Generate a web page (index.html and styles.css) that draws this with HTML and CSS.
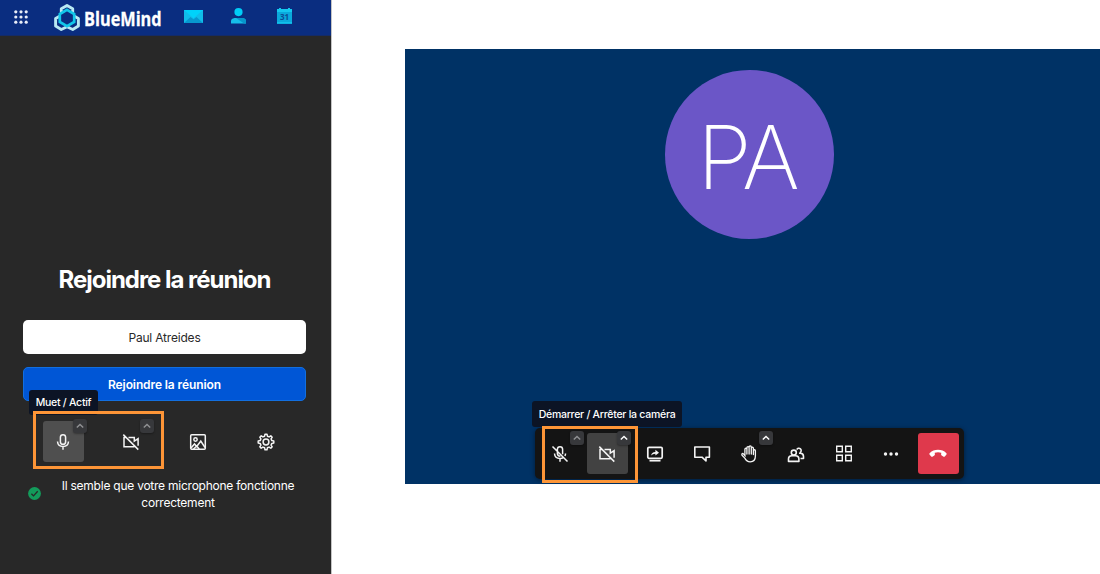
FILE: index.html
```html
<!DOCTYPE html>
<html lang="fr">
<head>
<meta charset="utf-8">
<title>BlueMind</title>
<link rel="stylesheet" href="styles.css">
</head>
<body>
<svg class="defs" aria-hidden="true">
  <symbol id="chevron" viewBox="0 0 14 14"><path d="M3.8 8.6 7 5.4l3.2 3.2" fill="none" stroke="currentColor" stroke-width="1.4"/></symbol>
  <symbol id="camera-off" viewBox="0 0 18 18"><path d="M3.500 4.500H2v9.200h10.500M6.500 4.500h5.800v3.600l3.800-2.500v7.200M1.300 1.600l15 15" fill="none" stroke="currentColor" stroke-width="1.5"/></symbol>
</svg>
<div class="screen">
  <aside class="panel">
    <header class="topbar">
      <svg class="apps" viewBox="0 0 14 14" fill="#e9edf7"><circle cx="1.800" cy="1.800" r="1.600"/><circle cx="7" cy="1.800" r="1.600"/><circle cx="12.200" cy="1.800" r="1.600"/><circle cx="1.800" cy="7" r="1.600"/><circle cx="7" cy="7" r="1.600"/><circle cx="12.200" cy="7" r="1.600"/><circle cx="1.800" cy="12.200" r="1.600"/><circle cx="7" cy="12.200" r="1.600"/><circle cx="12.200" cy="12.200" r="1.600"/></svg>
      <svg class="logo" viewBox="0 0 26 28" fill="none">
        <path d="M13 1.500 18.700 4.800v6.400l5.700 3.400v7.500l-5.700 3.400L13 22.800l-5.700 2.700-5.700-3.400v-7.500l5.700-3.400V4.800z" stroke="#b9e9f3" stroke-width="2.900" stroke-linejoin="round"/>
        <path d="M13 5.800 20.200 10v7.900L13 22.100l-7.200-4.200V10z" fill="#0a2d80" stroke="#12c7ea" stroke-width="2.700"/>
      </svg>
      <span class="brand">BlueMind</span>
      <svg class="mail" viewBox="0 0 19 13"><path fill="#10bdea" d="M0 0h19v13H0z"/><path fill="#0798cf" d="m0 13 6.500-6 3 2.200 3-2.200 6.500 6z"/><path fill="#00d2fa" d="M0 0h19L9.500 8.300z"/></svg>
      <svg class="person" viewBox="0 0 15 16"><path fill="#16bee9" d="M0 15.500V13q0-2.500 3.500-3h8q3.500.5 3.500 3v2.500z"/><path fill="#0795cb" d="m5 10 8 5.500h2V13q0-2.500-3.500-3z"/><circle cx="7.500" cy="4.100" r="4.100" fill="#00cdf7"/></svg>
      <svg class="calendar" viewBox="0 0 15 16"><path fill="#0aa9dc" d="M0 1h15v15H0z"/><path fill="#14c8ef" d="M0 1h15v3H0zM2 0h2v3H2zM11 0h2v3h-2zM0 14.200h15v1H0z"/><text x="7.500" y="12" text-anchor="middle" class="day">31</text></svg>
    </header>
    <main class="join">
      <h1 class="title">Rejoindre la réunion</h1>
      <div class="name">Paul Atreides</div>
      <div class="submit">Rejoindre la réunion</div>
      <div class="devices">
        <div class="tool active"><svg class="icon" viewBox="0 0 18 18" fill="none" stroke="currentColor" stroke-width="1.500"><rect x="6.400" y="1.700" width="5.200" height="9.600" rx="2.600"/><path d="M3.500 8.500q.3 5 5.500 5t5.500-5M9 13.500v3.300"/></svg><span class="tag"><svg><use href="#chevron"/></svg></span></div>
        <div class="tool"><svg class="icon"><use href="#camera-off"/></svg><span class="tag"><svg><use href="#chevron"/></svg></span></div>
        <div class="tool"><svg class="icon" viewBox="0 0 18 18" fill="none" stroke="currentColor" stroke-width="1.500"><rect x="1.700" y="1.700" width="14.600" height="14.600" rx="1"/><circle cx="6.500" cy="6.500" r="1.700"/><path d="m2 15 3.500-4 2.200 2.500L11.800 8l4.200 6.500M4.500 16l3.200-3 2.500 3"/></svg></div>
        <div class="tool"><svg class="icon" viewBox="0 0 18 18" fill="none" stroke="currentColor" stroke-width="1.500" stroke-linejoin="round"><circle cx="9" cy="9" r="2.900"/><path d="M7.600 3.200 8 1.200h2l.4 2 1.700.7 1.700-1.100 1.400 1.400-1.100 1.700.7 1.700 2 .4v2l-2 .4-.7 1.700 1.100 1.700-1.400 1.400-1.700-1.100-1.700.7-.4 2H8l-.4-2-1.700-.7-1.700 1.100-1.400-1.400 1.100-1.700-.7-1.700-2-.4V8l2-.4.7-1.700-1.100-1.700 1.400-1.400 1.700 1.100z"/></svg></div>
        <div class="tooltip muted-tip">Muet / Actif</div>
        <div class="highlight left-mark"></div>
      </div>
      <div class="status">
        <svg class="check" viewBox="0 0 13 13"><circle cx="6.500" cy="6.500" r="6.400" fill="#139b5b"/><path d="m3.400 6.700 2.100 2.200 4.200-4.600" fill="none" stroke="#282828" stroke-width="1.300"/></svg>
        <p>Il semble que votre microphone fonctionne<br>correctement</p>
      </div>
    </main>
  </aside>
  <section class="stage">
    <div class="avatar"><span>PA</span></div>
    <div class="toolbar">
      <div class="tool"><svg class="icon" viewBox="0 0 18 18" fill="none" stroke="currentColor" stroke-width="1.500"><path d="M6.400 6V4.300a2.600 2.600 0 0 1 5.200 0v5M6.400 7v1.700q.3 2.600 3 2.600M3.500 8.500q.3 5 5.500 5 2 0 3.300-.8M14.500 8.500q0 1.400-.6 2.500M9 13.500v3.300M1.500 1.500l15 15"/></svg><span class="tag"><svg><use href="#chevron"/></svg></span></div>
      <div class="tool active"><svg class="icon"><use href="#camera-off"/></svg><span class="tag bright"><svg><use href="#chevron"/></svg></span></div>
      <div class="tool"><svg class="icon" viewBox="0 0 18 18" fill="none" stroke="currentColor" stroke-width="1.700"><rect x="1.800" y="2.300" width="14.400" height="11" rx="1.200"/><path d="M3.500 15.700h11"/><path d="M5.200 10.500q.3-3.600 4.200-3.600V4.800L13 7.700l-3.600 2.800V8.800q-2.700-.1-4.200 1.700z" fill="currentColor" stroke="none"/></svg></div>
      <div class="tool"><svg class="icon" viewBox="0 0 18 18" fill="none" stroke="currentColor" stroke-width="1.600" stroke-linejoin="round"><path d="M1.800 2h14.600v10.200H13V16l-4-3.800H1.800z"/></svg></div>
      <div class="tool"><svg class="icon" viewBox="0 0 18 18" fill="none" stroke="currentColor" stroke-width="1.300" stroke-linecap="round" stroke-linejoin="round"><path d="M4.900 10V4.300c0-1.400 2-1.400 2 0V2.700c0-1.400 2.200-1.400 2.200 0V2c0-1.400 2.200-1.400 2.200 0v1.200c0-1.400 2.100-1.400 2.100 0v2.500c0-1.300 2-1.300 2 0V11c0 3.500-2 5.800-5.200 5.800-2.800 0-4.300-1.500-5.400-3.700L2 10.200c-.7-1.500.8-2.200 1.600-1.100l1.700 2M6.900 4v5M9.100 3v6M11.300 3v6M13.400 5v4.500"/></svg><span class="tag bright"><svg><use href="#chevron"/></svg></span></div>
      <div class="tool"><svg class="icon" viewBox="0 0 18 18" fill="none" stroke="currentColor" stroke-width="1.600" stroke-linejoin="round"><circle cx="6.800" cy="7.600" r="2.500"/><path d="M1.500 16.400v-2.300q0-3.300 3.300-3.300h3.700q3.400 0 3.400 3.300v2.300zM9.800 4.600a2.300 2.300 0 1 1 3.200 3M12 8.300h1.400q3.100.2 3.100 3.200v2h-3"/></svg></div>
      <div class="tool"><svg class="icon" viewBox="0 0 18 18" fill="none" stroke="currentColor" stroke-width="1.400"><path d="M1.700 1.200h5.600v5.600H1.700zM10.700 1.200h5.600v5.600h-5.600zM1.700 10.200h5.600v5.600H1.700zM10.700 10.200h5.600v5.600h-5.600z"/></svg></div>
      <div class="tool"><svg class="icon" viewBox="0 0 18 18" fill="currentColor"><circle cx="3.500" cy="9" r="1.700"/><circle cx="9" cy="9" r="1.700"/><circle cx="14.500" cy="9" r="1.700"/></svg></div>
      <div class="tool hangup"><svg class="icon" viewBox="0 0 18 18"><path fill="currentColor" d="M9 4.800Q4 4.800.8 7.900q-.9.900-.1 1.800l1.500 1.700q.7.700 1.600.2l1.500-1q.7-.5.6-1.300l-.2-1.500Q9 6.900 12.300 7.800l-.2 1.500q-.1.800.6 1.300l1.500 1q.9.500 1.600-.2l1.500-1.700q.8-.9-.1-1.800Q14 4.800 9 4.800z"/></svg></div>
      <div class="tooltip camera-tip">Démarrer / Arrêter la caméra</div>
      <div class="highlight right-mark"></div>
    </div>
  </section>
</div>
</body>
</html>
```
FILE: styles.css
```css
* { box-sizing: border-box; }
body { margin: 0; background: #fff; font-family: Inter, "Liberation Sans", sans-serif; color: #fff; }
svg { display: block; flex: none; }
.defs { display: none; }
.screen { display: flex; width: 1100px; height: 574px; overflow: hidden; }

.panel { flex: none; width: 332px; background: #282828; border-right: 1px solid #c4c4c4; }
.topbar { display: flex; align-items: flex-start; height: 36px; background: #0a2d80; border-bottom: 1px solid #142b66; }
.apps { width: 14px; height: 14px; margin: 10px 0 0 14px; }
.logo { width: 26px; height: 28px; margin: 4px 0 0 26px; }
.brand { width: 78px; margin: 5px 0 0 4px; font: 700 20px/27px "Open Sans", sans-serif; white-space: nowrap; transform: scaleX(.815); transform-origin: 0 0; -webkit-text-stroke: .3px #fff; }
.mail { width: 19px; height: 13px; margin: 10px 0 0 22px; }
.person { width: 15px; height: 16px; margin: 8px 0 0 28px; }
.calendar { width: 15px; height: 16px; margin: 8px 0 0 31px; }
.day { font: 700 8px "Open Sans", sans-serif; fill: #0b4d96; }

.join { display: flex; flex-direction: column; padding: 228px 25px 0 23px; }
.title { margin: 0; font-size: 24px; line-height: 32px; font-weight: 700; letter-spacing: -1.020px; text-align: center; white-space: nowrap; }
.name, .submit { height: 34px; border-radius: 5px; font-size: 12px; line-height: 35px; text-align: center; }
.name { margin-top: 24px; background: #fff; color: #292929; letter-spacing: -.200px; }
.submit { margin-top: 13px; line-height: 33px; border: 1px solid #126fe0; background: #0056d6; font-weight: 600; letter-spacing: -.100px; }
.devices { position: relative; display: flex; gap: 26.500px; margin: 20px 0 0 19.500px; }
.tool { position: relative; display: flex; align-items: center; justify-content: center; width: 41px; height: 41px; border-radius: 3px; color: #f4f4f4; }
.icon { width: 18px; height: 18px; }
.active { background: #4f4f4f; }
.tag { position: absolute; top: -2px; right: -3px; width: 14px; height: 14px; border-radius: 3px; background: #37383b; color: #909194; box-shadow: 0 1px 2px #0005; }
.tag svg { width: 14px; height: 14px; }
.bright { color: #fff; }
.tooltip { position: absolute; border-radius: 3px; background: #0c1425; font-size: 10.500px; font-weight: 500; letter-spacing: -.260px; text-align: center; white-space: nowrap; }
.muted-tip { left: -13.500px; top: -31px; width: 69px; height: 25px; line-height: 26px; }
.highlight { position: absolute; border: 3px solid #fd9537; }
.left-mark { left: -9.500px; top: -10px; width: 131px; height: 58px; }
.status { display: flex; align-items: flex-start; margin: 15px 0 0 5px; font-size: 12px; line-height: 17px; }
.status p { flex: none; width: 234px; margin: 0 0 0 20px; letter-spacing: -.240px; text-align: center; white-space: nowrap; }
.check { width: 13px; height: 13px; margin-top: 10px; }

.stage { display: flex; flex-direction: column; width: 695px; height: 435px; margin: 49px 0 0 73px; background: #003265; }
.avatar { display: flex; justify-content: center; width: 169px; height: 169px; margin: 21px 0 0 260px; border-radius: 50%; background: #6b56c7; font-size: 88px; line-height: 174px; font-weight: 200; letter-spacing: -3px; }
.avatar span { margin-left: -5px; }
.toolbar { position: relative; display: flex; gap: 6.250px; width: 429px; height: 51px; margin: 189px 0 0 130px; padding: 5px 0 0 4.500px; border-radius: 5px; background: #141414; box-shadow: 0 1px 5px #0007; }
.toolbar .tool { flex: none; }
.toolbar .active { background: #424242; }
.hangup { background: #df394c; }
.hangup .icon { color: #fff; }
.camera-tip { left: -3px; top: -27px; width: 150px; height: 26px; line-height: 27px; }
.right-mark { left: 7px; top: -2px; width: 96px; height: 57px; }
```
